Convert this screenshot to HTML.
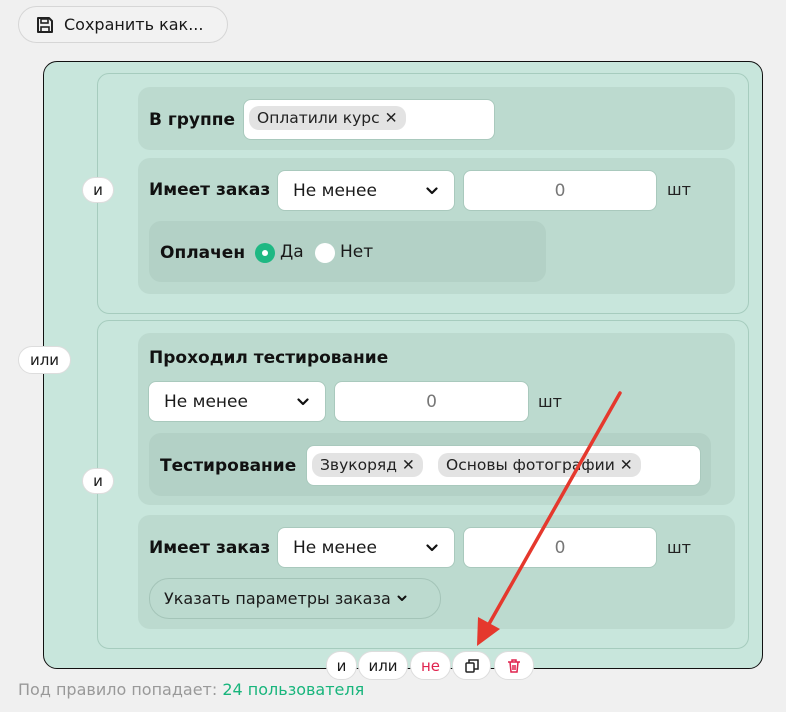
<!DOCTYPE html>
<html><head><meta charset="utf-8">
<style>
*{box-sizing:border-box;margin:0;padding:0}
body{width:786px;height:712px;background:#f0f0f0;font-family:"DejaVu Sans","Liberation Sans",sans-serif;color:#1a1a1a;position:relative;overflow:hidden}
.a{position:absolute}
.pill{position:absolute;background:#fff;border-radius:14px;border:1px solid #ddd;font-size:15px;display:flex;align-items:center;justify-content:center}
.row{position:absolute;background:#bcdacf;border-radius:12px}
.nest{position:absolute;background:#b3d1c6;border-radius:12px}
.inp{position:absolute;background:#fff;border-radius:8px;border:1px solid #a9c9bd;font-size:17px;display:flex;align-items:center}
.lbl{position:absolute;font-size:17px;font-weight:bold;color:#111;line-height:22px}
.chip{position:absolute;background:#e3e3e3;border-radius:10px;font-size:15.5px;height:24px;display:flex;align-items:center;padding:0 8px;color:#222;white-space:nowrap}
.grp{position:absolute;border:1px solid #a6ccbe;border-radius:12px}
.sel{padding-left:15px;justify-content:space-between;padding-right:16px}
.num{justify-content:center;color:#777}
.sht{position:absolute;font-size:16px;color:#222}
</style></head><body>
<div class="a" style="left:18px;top:6px;width:210px;height:37px;border:1px solid #d6d6d6;border-radius:19px;background:#f2f2f2;display:flex;align-items:center;padding-left:16px;font-size:16px;white-space:nowrap">
<svg width="20" height="20" viewBox="0 0 20 20" style="margin-right:9px"><path d="M3 3h11l3 3v11H3z" fill="none" stroke="#222" stroke-width="2" stroke-linejoin="round"/><rect x="6" y="4" width="7" height="4" fill="none" stroke="#222" stroke-width="1.6"/><rect x="6" y="12" width="8" height="5" fill="none" stroke="#222" stroke-width="1.6"/></svg>Сохранить как...</div>

<div class="a" style="left:43px;top:61px;width:720px;height:608px;background:#c8e6dc;border:1px solid #111;border-radius:14px"></div>

<div class="grp" style="left:97px;top:73px;width:652px;height:241px"></div>
<div class="row" style="left:138px;top:87px;width:597px;height:63px"></div>
<div class="lbl" style="left:149px;top:109px">В группе</div>
<div class="inp" style="left:243px;top:99px;width:252px;height:41px"></div>
<div class="chip" style="left:249px;top:106px">Оплатили курс&nbsp;✕</div>

<div class="row" style="left:138px;top:158px;width:597px;height:136px"></div>
<div class="lbl" style="left:149px;top:179px">Имеет заказ</div>
<div class="inp sel" style="left:277px;top:170px;width:178px;height:41px">Не менее<svg width="12" height="8" viewBox="0 0 12 8"><path d="M1.5 1.5L6 6l4.5-4.5" fill="none" stroke="#111" stroke-width="2.2" stroke-linecap="round" stroke-linejoin="round"/></svg></div>
<div class="inp num" style="left:463px;top:170px;width:194px;height:41px">0</div>
<div class="sht" style="left:667px;top:180px">шт</div>
<div class="nest" style="left:149px;top:221px;width:397px;height:61px"></div>
<div class="lbl" style="left:160px;top:242px">Оплачен</div>
<div class="a" style="left:255px;top:243px;width:20px;height:20px;border-radius:50%;background:#1fb883"></div>
<div class="a" style="left:262px;top:250px;width:6px;height:6px;border-radius:50%;background:#fff"></div>
<div class="a" style="left:280px;top:242px;font-size:17px">Да</div>
<div class="a" style="left:315px;top:243px;width:20px;height:20px;border-radius:50%;background:#fff"></div>
<div class="a" style="left:340px;top:242px;font-size:17px">Нет</div>
<div class="pill" style="left:82px;top:177px;width:32px;height:26px">и</div>

<div class="pill" style="left:18px;top:346px;width:53px;height:28px">или</div>

<div class="grp" style="left:97px;top:320px;width:652px;height:329px"></div>
<div class="row" style="left:138px;top:333px;width:597px;height:172px"></div>
<div class="lbl" style="left:149px;top:347px">Проходил тестирование</div>
<div class="inp sel" style="left:148px;top:381px;width:178px;height:41px">Не менее<svg width="12" height="8" viewBox="0 0 12 8"><path d="M1.5 1.5L6 6l4.5-4.5" fill="none" stroke="#111" stroke-width="2.2" stroke-linecap="round" stroke-linejoin="round"/></svg></div>
<div class="inp num" style="left:334px;top:381px;width:195px;height:41px">0</div>
<div class="sht" style="left:538px;top:392px">шт</div>
<div class="nest" style="left:149px;top:433px;width:562px;height:63px"></div>
<div class="lbl" style="left:160px;top:455px">Тестирование</div>
<div class="inp" style="left:306px;top:445px;width:395px;height:41px"></div>
<div class="chip" style="left:312px;top:453px">Звукоряд&nbsp;✕</div>
<div class="chip" style="left:438px;top:453px">Основы фотографии&nbsp;✕</div>
<div class="pill" style="left:82px;top:468px;width:32px;height:26px">и</div>

<div class="row" style="left:138px;top:515px;width:597px;height:114px"></div>
<div class="lbl" style="left:149px;top:537px">Имеет заказ</div>
<div class="inp sel" style="left:277px;top:527px;width:178px;height:41px">Не менее<svg width="12" height="8" viewBox="0 0 12 8"><path d="M1.5 1.5L6 6l4.5-4.5" fill="none" stroke="#111" stroke-width="2.2" stroke-linecap="round" stroke-linejoin="round"/></svg></div>
<div class="inp num" style="left:463px;top:527px;width:194px;height:41px">0</div>
<div class="sht" style="left:667px;top:538px">шт</div>
<div class="a" style="left:149px;top:578px;width:292px;height:41px;border:1px solid #a4c4b8;border-radius:20px;font-size:16px;display:flex;align-items:center;padding-left:14px;white-space:nowrap">Указать параметры заказа <svg width="10" height="7" viewBox="0 0 10 7" style="margin-left:6px"><path d="M1.5 1.5L5 5l3.5-3.5" fill="none" stroke="#111" stroke-width="2" stroke-linecap="round" stroke-linejoin="round"/></svg></div>

<div class="pill" style="left:326px;top:651px;width:31px;height:29px">и</div>
<div class="pill" style="left:358px;top:651px;width:50px;height:29px">или</div>
<div class="pill" style="left:410px;top:651px;width:41px;height:29px;color:#e0234e">не</div>
<div class="pill" style="left:452px;top:651px;width:39px;height:29px"><svg width="16" height="16" viewBox="0 0 16 16"><rect x="2" y="5" width="8" height="9" rx="1" fill="none" stroke="#222" stroke-width="1.5"/><path d="M5 5V2h9v9h-4" fill="none" stroke="#222" stroke-width="1.5"/></svg></div>
<div class="pill" style="left:494px;top:651px;width:40px;height:29px"><svg width="16" height="16" viewBox="0 0 16 16" fill="none" stroke="#e0234e" stroke-width="1.5"><path d="M2 4h12M6 4V2h4v2M4 4l1 10h6l1-10M7 7v5M9 7v5"/></svg></div>

<svg class="a" style="left:0;top:0" width="786" height="712"><line x1="620" y1="393" x2="489" y2="624" stroke="#e5382d" stroke-width="3.5" stroke-linecap="round"/><polygon points="477,646 478,617 500,629" fill="#e5382d"/></svg>

<div class="a" style="left:18px;top:680px;font-size:16px;color:#999;white-space:nowrap">Под правило попадает: <span style="color:#18b57c">24 пользователя</span></div>
</body></html>
